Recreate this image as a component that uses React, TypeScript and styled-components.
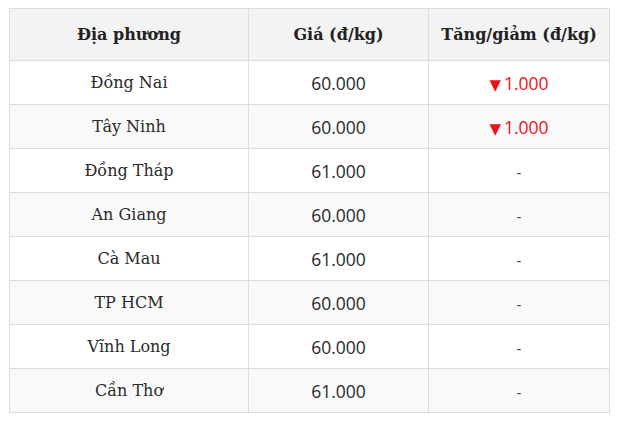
import * as React from "react";
import styled, { createGlobalStyle } from "styled-components";

interface Row {
	place: string;
	price: string;
	change: number | null;
}

const rows: Row[] = [
	{ place: "Đồng Nai", price: "60.000", change: -1000 },
	{ place: "Tây Ninh", price: "60.000", change: -1000 },
	{ place: "Đồng Tháp", price: "61.000", change: null },
	{ place: "An Giang", price: "60.000", change: null },
	{ place: "Cà Mau", price: "61.000", change: null },
	{ place: "TP HCM", price: "60.000", change: null },
	{ place: "Vĩnh Long", price: "60.000", change: null },
	{ place: "Cần Thơ", price: "61.000", change: null },
];

const GlobalStyle = createGlobalStyle`
	html, body {
		margin: 0;
		padding: 0;
		background: #ffffff;
	}
	body {
		font-family: "DejaVu Serif", serif;
		color: #222;
	}
`;

const Page = styled.div`
	padding: 8px 9px;
`;

const Table = styled.table`
	width: 600px;
	border-collapse: collapse;
	table-layout: fixed;
	border: 1px solid #dcdcdc;
`;

const HeadCell = styled.th`
	height: 51px;
	padding: 0 8px;
	background: #f3f3f3;
	border: 1px solid #dcdcdc;
	font-family: "DejaVu Serif", serif;
	font-size: 16px;
	font-weight: bold;
	color: #222;
	text-align: center;
`;

const BodyRow = styled.tr<{ $striped: boolean }>`
	background: ${(p) => (p.$striped ? "#f9f9f9" : "#ffffff")};
`;

const Cell = styled.td<{ $sans?: boolean }>`
	height: 43px;
	padding: 0 8px;
	border: 1px solid #dcdcdc;
	text-align: center;
	font-family: ${(p) => (p.$sans ? '"Open Sans", sans-serif' : '"DejaVu Serif", serif')};
	font-size: ${(p) => (p.$sans ? "17.5px" : "16px")};
	color: #2a2a2a;
`;

const Down = styled.span`
	color: #e8141b;
	font-family: "Open Sans", sans-serif;
`;

const Arrow = styled.span`
	font-family: "DejaVu Sans", sans-serif;
	font-size: 15px;
	margin-right: 3px;
`;

const Dash = styled.span`
	color: #444;
	font-family: "Open Sans", sans-serif;
	font-size: 15px;
`;

export default function App() {
	return (
		<Page>
			<GlobalStyle />
			<Table>
				<colgroup>
					<col style={{ width: 239 }} />
					<col style={{ width: 180 }} />
					<col style={{ width: 181 }} />
				</colgroup>
				<thead>
					<tr>
						<HeadCell>Địa phương</HeadCell>
						<HeadCell>Giá (đ/kg)</HeadCell>
						<HeadCell>Tăng/giảm (đ/kg)</HeadCell>
					</tr>
				</thead>
				<tbody>
					{rows.map((r, i) => (
						<BodyRow key={r.place} $striped={i % 2 === 1}>
							<Cell>{r.place}</Cell>
							<Cell $sans>{r.price}</Cell>
							<Cell $sans>
								{r.change !== null ? (
									<Down>
										<Arrow>▼</Arrow>
										{Math.abs(r.change / 1000).toFixed(3)}
									</Down>
								) : (
									<Dash>-</Dash>
								)}
							</Cell>
						</BodyRow>
					))}
				</tbody>
			</Table>
		</Page>
	);
}
